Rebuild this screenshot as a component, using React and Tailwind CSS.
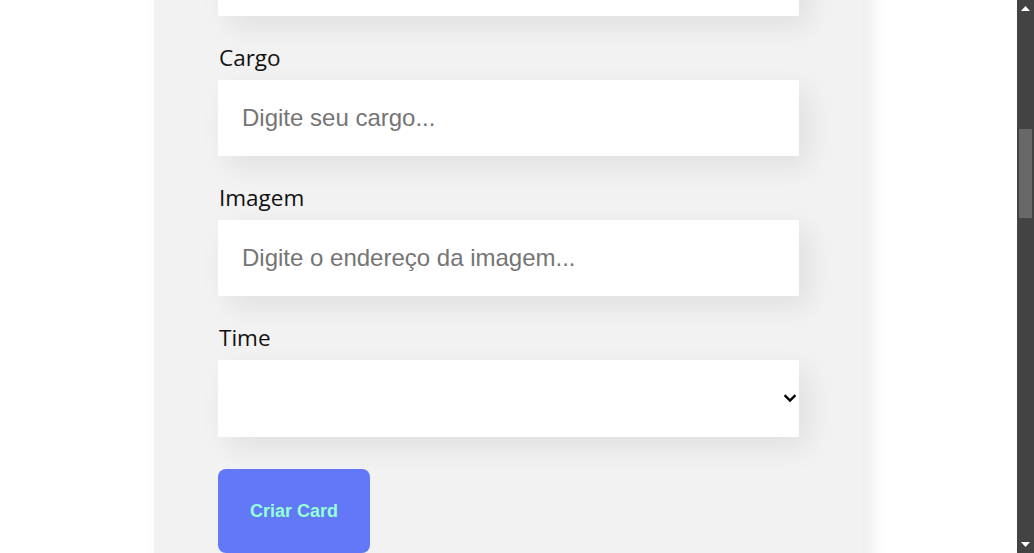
import React from "react";

function Field({ label, placeholder, select }) {
  return (
    <div className="flex flex-col">
      <label className="mb-[6px] pt-[2px] pl-[1px] text-[22.5px] leading-[32px] text-[#111]" style={{ fontFamily: '"Open Sans", "Noto Sans", sans-serif' }}>
        {label}
      </label>
      {select ? (
        <div className="relative h-[77px] w-full bg-white shadow-[10px_10px_30px_rgba(0,0,0,0.08)]">
          <svg className="absolute right-[3px] top-[33px]" width="12" height="10" viewBox="0 0 12 10">
            <path d="M1.5 3 L6 7.5 L10.5 3" fill="none" stroke="#000" strokeWidth="2.4" strokeLinecap="square" />
          </svg>
        </div>
      ) : (
        <input
          className="h-[76px] w-full bg-white px-[24px] text-[24px] text-black outline-none shadow-[10px_10px_30px_rgba(0,0,0,0.08)] placeholder:text-[#757575]"
          style={{ fontFamily: '"Liberation Sans", Arial, sans-serif' }}
          placeholder={placeholder}
        />
      )}
    </div>
  );
}

export default function App() {
  return (
    <div className="flex h-[553px] w-[1034px] overflow-hidden bg-white">
      <div className="relative flex-1 overflow-hidden">
        <div className="mx-auto -mt-[60px] w-[709px] bg-[#f2f2f2] px-[64px] shadow-[8px_8px_16px_rgba(0,0,0,0.08)]">
          <div className="flex flex-col gap-[24px]">
            <div className="h-[76px] w-full bg-white shadow-[10px_10px_30px_rgba(0,0,0,0.08)]" />
            <Field label="Cargo" placeholder="Digite seu cargo..." />
            <Field label="Imagem" placeholder="Digite o endereço da imagem..." />
            <Field label="Time" select />
            <div className="pt-[8px] pb-[40px]">
              <button
                className="h-[84px] w-[152px] rounded-[8px] bg-[#6278f7] text-[18px] font-bold text-[#95ffd4]"
                style={{ fontFamily: '"Liberation Sans", Arial, sans-serif' }}
              >
                Criar Card
              </button>
            </div>
          </div>
        </div>
      </div>
      <div className="flex w-[17px] flex-col bg-[#434343]">
        <div className="flex h-[17px] items-center justify-center">
          <svg width="9" height="5" viewBox="0 0 9 5"><path d="M0 5 L4.5 0 L9 5 Z" fill="#fff" /></svg>
        </div>
        <div className="mt-[112px] ml-[2px] h-[89px] w-[13px] bg-[#686868]" />
        <div className="flex-1" />
        <div className="flex h-[17px] items-center justify-center">
          <svg width="9" height="5" viewBox="0 0 9 5"><path d="M0 0 L4.5 5 L9 0 Z" fill="#fff" /></svg>
        </div>
      </div>
    </div>
  );
}
